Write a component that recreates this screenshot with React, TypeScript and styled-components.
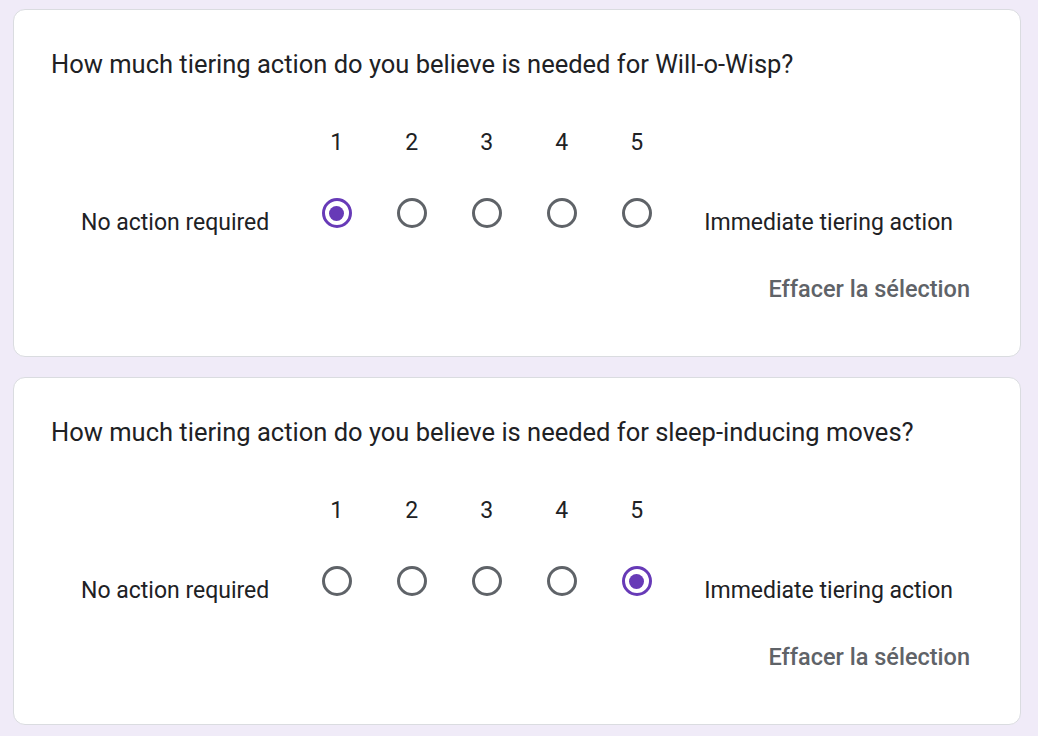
import React, { useState } from 'react'
import styled, { createGlobalStyle } from 'styled-components'

const GlobalStyle = createGlobalStyle`
  html, body {
    margin: 0;
    padding: 0;
    background: #f0ebf8;
    font-family: Roboto, "Noto Sans", Arial, sans-serif;
    color: #202124;
  }
`

const Page = styled.div`
  display: flex;
  flex-direction: column;
  gap: 20px;
  padding: 9px 17px 12px 13px;
`

const Card = styled.div`
  background: #fff;
  border: 1px solid #dadce0;
  border-radius: 12px;
  padding: 36px 37px 24px 37px;
  box-sizing: border-box;
  height: 348px;
`

const Title = styled.div`
  font-size: 25.5px;
  line-height: 36px;
`

const Scale = styled.div`
  display: flex;
  align-items: flex-end;
  margin-top: 46px;
`

const SideLabel = styled.div`
  font-size: 23px;
  line-height: 30px;
  padding: 0 30px;
  white-space: nowrap;
`

const Column = styled.label`
  width: 75px;
  display: flex;
  flex-direction: column;
  align-items: center;
  cursor: pointer;
`

const Num = styled.div`
  font-size: 23px;
  line-height: 30px;
  height: 30px;
  margin-bottom: 31px;
`

const RadioOuter = styled.div<{ $on: boolean }>`
  width: 30px;
  height: 30px;
  box-sizing: border-box;
  border-radius: 50%;
  border: 3px solid ${(p) => (p.$on ? '#673ab7' : '#5f6368')};
  display: flex;
  align-items: center;
  justify-content: center;
  margin: 9px 0 10px;
`

const RadioDot = styled.div`
  width: 15px;
  height: 15px;
  border-radius: 50%;
  background: #673ab7;
`

const Footer = styled.div`
  display: flex;
  justify-content: flex-end;
  margin-top: 31px;
`

const ClearButton = styled.button`
  border: none;
  background: none;
  font-family: Roboto, "Noto Sans", Arial, sans-serif;
  font-weight: 500;
  font-size: 23.5px;
  color: #5f6368;
  padding: 6px 13px 6px 11px;
  cursor: pointer;
`

interface IQuestionProps {
  title: string
  initial: number
}

const Question: React.FunctionComponent<IQuestionProps> = (props) => {
  const [value, setValue] = useState<number | null>(props.initial)

  return (
    <Card>
      <Title>{props.title}</Title>
      <Scale>
        <SideLabel>No action required</SideLabel>
        {[1, 2, 3, 4, 5].map((n) => (
          <Column key={n} onClick={() => setValue(n)}>
            <Num>{n}</Num>
            <RadioOuter $on={value === n}>{value === n && <RadioDot />}</RadioOuter>
          </Column>
        ))}
        <SideLabel>Immediate tiering action</SideLabel>
      </Scale>
      <Footer>
        <ClearButton onClick={() => setValue(null)}>Effacer la sélection</ClearButton>
      </Footer>
    </Card>
  )
}

const App: React.FunctionComponent = () => {
  return (
    <>
      <GlobalStyle />
      <Page>
        <Question title="How much tiering action do you believe is needed for Will-o-Wisp?" initial={1} />
        <Question title="How much tiering action do you believe is needed for sleep-inducing moves?" initial={5} />
      </Page>
    </>
  )
}

export default App
